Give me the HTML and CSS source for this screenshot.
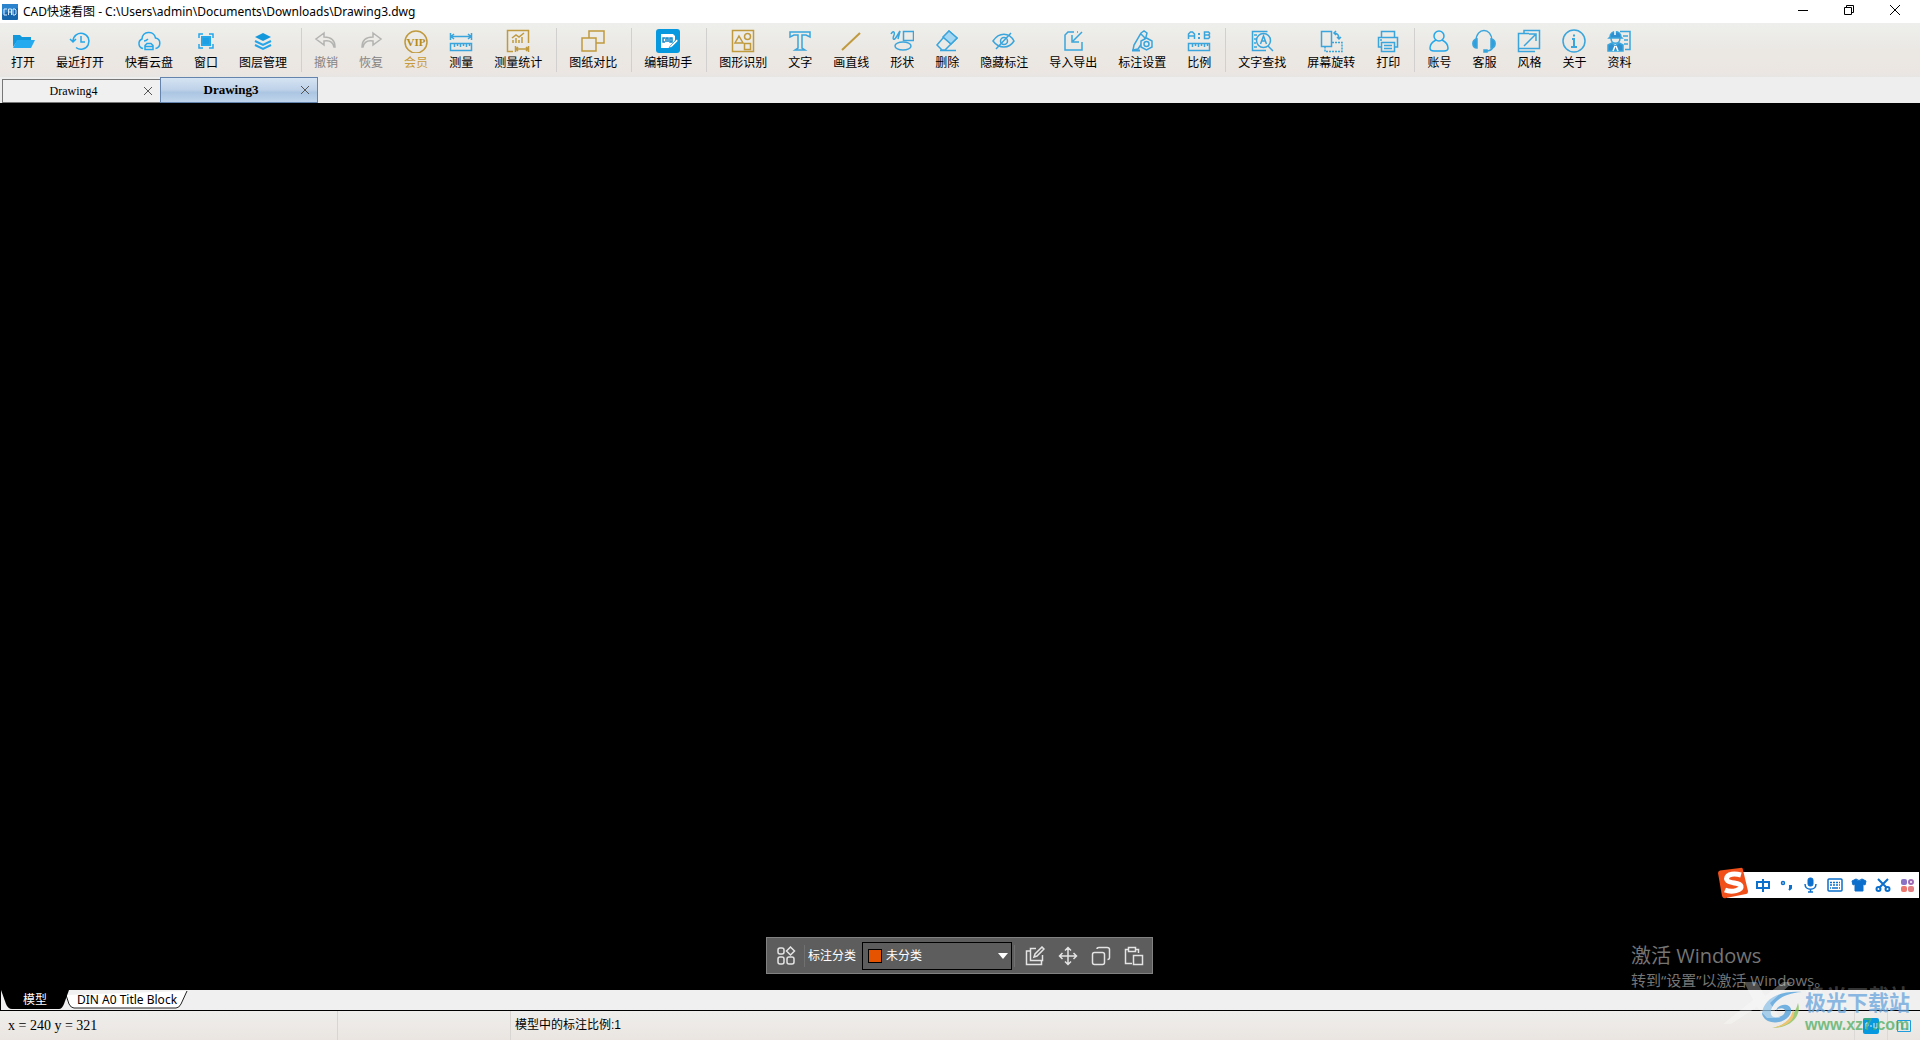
FILE: index.html
```html
<!DOCTYPE html>
<html lang="zh-CN">
<head>
<meta charset="utf-8">
<title>CAD快速看图</title>
<link rel="stylesheet" href="styles.css">
</head>
<body>
<div class="app">
  <header class="titlebar">
    <svg class="app-icon" viewBox="0 0 16 16"><rect width="16" height="16" rx="1" fill="#1565ad"/><path d="M0 0h16v4L0 10z" fill="#2a83cc"/><path d="M5 5H2v6h3M6.500 11V5h3v6M6.500 8h3M11 5h2l1 1v4l-1 1h-2z" fill="none" stroke="#d5eaff"/></svg>
    <h1 class="title">CAD快速看图 - C:\Users\admin\Documents\Downloads\Drawing3.dwg</h1>
    <div class="window-controls">
      <button class="win-btn" aria-label="最小化"><svg viewBox="0 0 12 12"><path d="M1 6.500h10"/></svg></button>
      <button class="win-btn" aria-label="还原"><svg viewBox="0 0 12 12"><path d="M1.500 3.500h7v7h-7zM3.500 3V1.500h7v7H9"/></svg></button>
      <button class="win-btn" aria-label="关闭"><svg viewBox="0 0 12 12"><path d="M1 1l10 10M11 1L1 11"/></svg></button>
    </div>
  </header>

  <nav class="toolbar" aria-label="工具栏">
    <button class="tool"><svg viewBox="0 0 24 24"><path d="M2 18V6h7l2 2h9v3H7z" fill="#1498dc"/><path d="M6 11h18l-4 8H2z" fill="#25a9ef"/></svg>打开</button>
    <button class="tool"><svg class="cyan" viewBox="0 0 24 24"><path d="M5 12a8 8 0 1 1 3 6.500M2 10l3 3 3-3M13 7v6h4"/></svg>最近打开</button>
    <button class="tool"><svg class="cyan" viewBox="0 0 24 24"><path d="M6 19.500a5 5 0 0 1-1-9.500C5 2 17 1 18.500 9c6 1 5.500 9.500 0 10.500M7 12c2 0 3-1 4-2M8 20.500v-4l2-2h4l2 2v4zM8 17.500h8"/></svg>快看云盘</button>
    <button class="tool"><svg class="cyan" viewBox="0 0 24 24"><rect x="8" y="8" width="8" height="8" fill="#1f9fe3" stroke-width="2"/><path d="M5 9V5h4M15 5h4v4M19 15v4h-4M9 19H5v-4"/></svg>窗口</button>
    <button class="tool"><svg viewBox="0 0 24 24"><path d="M12 4l8 4-8 4-8-4z" fill="#1498dc"/><path d="M4 12l8 4 8-4M4 16l8 4 8-4" fill="none" stroke="#25a5e9" stroke-width="2"/></svg>图层管理</button>
    <span class="sep"></span>
    <button class="tool muted" disabled><svg class="gray" viewBox="0 0 24 24"><path d="M10 4l-8 6 8 6v-4c6-1 9 1 10 6h1c0-7-4-10-11-10z"/></svg>撤销</button>
    <button class="tool muted" disabled><svg class="gray" viewBox="0 0 24 24"><path d="M14 4l8 6-8 6v-4c-6-1-9 1-10 6H3c0-7 4-10 11-10z"/></svg>恢复</button>
    <button class="tool vip"><svg class="gold" viewBox="0 0 24 24"><circle cx="12" cy="13" r="11"/><text x="12" y="17" class="vip-text">VIP</text></svg>会员</button>
    <button class="tool"><svg class="blue" viewBox="0 0 24 24"><path d="M1.500 4v7M22.500 4v7M2 7.500h20M5 5L2 7.500 5 10M19 5l3 2.500L19 10M1.500 14.500h21v7h-21zM5.500 15v3M8.500 15v2M11.500 15v3M14.500 15v2M17.500 15v3M20.500 15v2"/></svg>测量</button>
    <button class="tool"><svg class="gold" viewBox="0 0 24 24"><path d="M7 22.500H1.500v-21h21V14M6 9l4-3 3 2 5-4M7 14v-3M10 14V9M13 14v-3M16 14V8M9.500 17v6M22.500 17v6M10 20h12M12 18l-2 2 2 2M20 18l2 2-2 2"/></svg>测量统计</button>
    <span class="sep"></span>
    <button class="tool"><svg class="gold" viewBox="0 0 24 24"><path d="M8 9V2h15v12h-8M1 9h14v13H1z"/></svg>图纸对比</button>
    <span class="sep"></span>
    <button class="tool"><svg viewBox="0 0 24 24"><rect width="24" height="24" rx="3" fill="#0799df"/><path d="M5 5h12l2 2v4l-6 8H5z" fill="#fff"/><path d="M9 9H7v4h2M10 13V9h2v4M14 9h2v4h-2z" fill="none" stroke="#1689c8"/><path d="M21 10l-7 7-1 2 3-1 6-6z" fill="#fff" stroke="#0784c8" stroke-width=".5"/></svg>编辑助手</button>
    <span class="sep"></span>
    <button class="tool"><svg class="gold" viewBox="0 0 24 24"><path d="M1.500 1.500h21v21h-21zM8 7l4 7H4zM13.500 14.500h6v6h-6z"/><circle cx="16.500" cy="7.500" r="3"/></svg>图形识别</button>
    <button class="tool"><svg class="blue" viewBox="0 0 24 24"><path d="M2 3h20v5l-4-2h-4v13l3 2H7l3-2V6H6L2 8z"/></svg>文字</button>
    <button class="tool"><svg class="gold" viewBox="0 0 24 24"><path d="M3 21L21 4" stroke-width="2"/></svg>画直线</button>
    <button class="tool"><svg class="blue" viewBox="0 0 24 24"><path d="M13.500 2.500h10v9h-10zM1 5c2-4 4-2 3 1-2 5 0 6 3 1l3-5-2 8"/><ellipse cx="13" cy="17" rx="8" ry="4"/></svg>形状</button>
    <button class="tool"><svg class="blue" viewBox="0 0 24 24"><path d="M14 2l8 7-12 12H7l-5-5zM8 8l8 7M5 21.500h16"/><path d="M14 2l8 7-6 6-8-7z" fill="#a6d7f2"/></svg>删除</button>
    <button class="tool"><svg class="blue" viewBox="0 0 24 24"><path d="M1 12c6-9 16-9 21 0-5 8-15 8-21 0zM19 4L4 20"/><circle cx="12" cy="12" r="3.500"/></svg>隐藏标注</button>
    <button class="tool"><svg class="blue" viewBox="0 0 24 24"><path d="M13 3H7L4 6v15h17v-8M21 3l-9 9M11 6v7h7M16 3h1"/></svg>导入导出</button>
    <button class="tool"><svg class="blue" viewBox="0 0 24 24"><path d="M11 4l3-2 3 2-1 4-8 12-5 1 1-5zM11 5l4 4"/><path d="M2 21.500h8" stroke-width="2"/><path d="M16.500 9l5.500 3v6l-5.500 3-5.500-3v-6z" fill="#eeecea"/><circle cx="16.500" cy="15" r="2.500"/></svg>标注设置</button>
    <button class="tool"><svg class="blue" viewBox="0 0 24 24"><path d="M1.500 10V5l2-2h2l2 2v5M2 7h5M17.500 3v6.500h4l1-1V7l-1-1h-4 4l1-1V4l-1-1zM1.500 14.500h21v7h-21zM5.500 15v3M8.500 15v2M11.500 15v3M14.500 15v2M17.500 15v3M20.500 15v2"/><path d="M12 4v2M12 8v2" stroke-width="2"/></svg>比例</button>
    <span class="sep"></span>
    <button class="tool"><svg class="blue" viewBox="0 0 24 24"><path d="M16 21.500H2.500v-19h15M4 6h3M4 10h2M4 14h2M4 18h3M18 17l5 5"/><circle cx="13.500" cy="11.500" r="7"/><path d="M10.500 15l3-8 3 8M11.500 12h4"/></svg>文字查找</button>
    <button class="tool"><svg class="blue" viewBox="0 0 24 24"><path d="M2.500 2.500h10v15h-10zM15 4c4 0 5 2 5 6M17 2l-2 2 2 2M18 8l2 2 2-2"/><path d="M13 13.500h10v9h-17V18" stroke-dasharray="2 1"/></svg>屏幕旋转</button>
    <button class="tool"><svg class="blue" viewBox="0 0 24 24"><path d="M5.500 8V2.500h13V8M5 18H2.500V8.500h19V18H19M5.500 13.500h13v9h-13zM8 16.500h8M8 19.500h8M4 11h2"/></svg>打印</button>
    <span class="sep"></span>
    <button class="tool"><svg class="cyan" viewBox="0 0 24 24"><circle cx="12" cy="7" r="5"/><path d="M9 11c-4 2-6 5-6 8q0 3 4 3h10q4 0 4-3c0-3-2-6-6-8"/></svg>账号</button>
    <button class="tool"><svg class="blue" viewBox="0 0 24 24"><path d="M4 12c0-14 16-14 16 0M21 18c-1 3-3 4-7 4"/><path d="M5 10v9c-5 0-6-8 0-9zM19 10v9c5 0 6-8 0-9zM12 21h3v2h-3z" fill="#2f9fdd"/></svg>客服</button>
    <button class="tool"><svg class="blue" viewBox="0 0 24 24"><path d="M7 4.500v-3h15.500v18H19M18 22.500H1.500v-18H12M1.500 19.500h21M7 17L18 6M12 5h7v7"/></svg>风格</button>
    <button class="tool"><svg class="blue" viewBox="0 0 24 24"><circle cx="12" cy="12" r="11"/><path d="M10 10h2v8M9 18h6M12 5.500v2" stroke-width="2"/></svg>关于</button>
    <button class="tool"><svg class="blue" viewBox="0 0 24 24"><path d="M13 2.500h10v18h-5M16 7h5M17 11h4M17 15h4"/><path d="M3 8c0-7 11-7 11 0l1 1H2z" fill="#2f8fcf"/><path d="M4 9c0 7 9 7 9 0"/><path d="M5 14l3 3 4-3 4 2v6H1v-6z" fill="#2f8fcf"/><path d="M8 17l-2 5M9 17l2 5M8 2v4" stroke="#fff"/></svg>资料</button>
  </nav>

  <div class="doc-tabs" role="tablist">
    <div class="doc-tab"><button class="doc-name" role="tab">Drawing4</button><button class="doc-close" aria-label="关闭 Drawing4"><svg viewBox="0 0 8 8"><path d="M0 0l8 8M8 0L0 8"/></svg></button></div>
    <div class="doc-tab active"><button class="doc-name" role="tab" aria-selected="true">Drawing3</button><button class="doc-close" aria-label="关闭 Drawing3"><svg viewBox="0 0 8 8"><path d="M0 0l8 8M8 0L0 8"/></svg></button></div>
  </div>

  <main class="canvas">
    <div class="activation">
      <p class="activation-title">激活 Windows</p>
      <p class="activation-sub">转到“设置”以激活 Windows。</p>
    </div>

    <div class="ime">
      <svg class="ime-logo" viewBox="0 0 32 32"><path d="M1 6q0-2 2-2.500L23 1q3-1 3 2l5 21q0 3-2 3L9 31q-3 1-4-2z" fill="#f1501b"/><path d="M24 8C14 5 8 9 10 13s13 2 14 6-9 7-16 4" fill="none" stroke="#fff" stroke-width="5"/></svg>
      <button class="ime-btn" aria-label="中文"><svg viewBox="0 0 16 16"><path d="M2 5h12v6H2zM8 2v13" fill="none" stroke-width="2"/></svg></button>
      <button class="ime-btn" aria-label="标点"><svg viewBox="0 0 16 16"><circle cx="4" cy="6" r="1.500" fill="none" stroke-width="1.500"/><path d="M10 9h2v2l-2 2" stroke-width="2"/></svg></button>
      <button class="ime-btn" aria-label="语音"><svg viewBox="0 0 16 16"><rect x="5" y="1" width="5" height="8" rx="2"/><path d="M2 7c0 7 11 7 11 0M7.500 12v3M5 15h5" fill="none" stroke-width="1.500"/></svg></button>
      <button class="ime-btn" aria-label="键盘"><svg viewBox="0 0 16 16"><rect x="1" y="2" width="14" height="12" rx="1" fill="none" stroke-width="1.500"/><path d="M3 5.500h2M6 5.500h2M9 5.500h2M12 5.500h1M3 8h2M6 8h2M9 8h2M12 8h1M3 11h1M5 11h6M12 11h1" fill="none" stroke-width="1.500"/></svg></button>
      <button class="ime-btn" aria-label="皮肤"><svg viewBox="0 0 16 16"><path d="M5 2q3 3 6 0l4 2-1 4-2-1v7H4V7L2 8 1 4z"/></svg></button>
      <button class="ime-btn" aria-label="截图"><svg viewBox="0 0 16 16"><path d="M3 2l9 9M13 2l-9 9" fill="none" stroke-width="2"/><circle cx="3.500" cy="12" r="2" fill="none" stroke-width="2"/><circle cx="12.500" cy="12" r="2" fill="none" stroke-width="2"/></svg></button>
      <button class="ime-btn" aria-label="工具箱"><svg viewBox="0 0 16 16"><g stroke="none"><rect x="2" y="2" width="6" height="6" rx="2" fill="#8a72c4"/><rect x="2" y="9" width="6" height="6" rx="2" fill="#ed796e"/><rect x="9" y="9" width="6" height="6" rx="2" fill="#e37f83"/></g><circle cx="12" cy="5" r="2" fill="none" stroke="#a06bb4" stroke-width="2"/></svg></button>
    </div>

    <div class="float-bar">
      <button class="float-btn" aria-label="分类面板"><svg viewBox="0 0 20 20"><rect x="2" y="2" width="6" height="6" rx="2"/><path d="M14.500 1l4 4-4 4-4-4z"/><rect x="2" y="11" width="6" height="7" rx="2"/><rect x="11" y="11" width="7" height="7" rx="2"/></svg></button>
      <span class="float-sep"></span>
      <label class="float-label" for="category">标注分类</label>
      <div class="combo">
        <span class="swatch"></span>
        <select class="combo-select" id="category"><option>未分类</option></select>
        <svg class="combo-arrow" viewBox="0 0 10 6"><path d="M0 0h10L5 6z"/></svg>
      </div>
      <span class="float-sep"></span>
      <button class="float-btn" aria-label="编辑"><svg viewBox="0 0 20 20"><path d="M11 2.500H5.500v12h12V9M5 5H1.500v13.500h15V15M9 11l1-3 7-7 2 2-7 7z"/></svg></button>
      <button class="float-btn" aria-label="移动"><svg viewBox="0 0 20 20"><path d="M10 2v16M2 10h16M7 4.500l3-3 3 3M7 15.500l3 3 3-3M4.500 7l-3 3 3 3M15.500 7l3 3-3 3"/></svg></button>
      <button class="float-btn" aria-label="复制"><svg viewBox="0 0 20 20"><rect x="1.500" y="6.500" width="12" height="12" rx="2"/><path d="M6 3q0-1.500 2-1.500h8q2.500 0 2.500 2v8q0 2-2 2"/></svg></button>
      <button class="float-btn" aria-label="粘贴"><svg viewBox="0 0 20 20"><path d="M8 17.500H1.500v-14H4M12 3.500h2.500V7M4.500 1.500h7v4h-7zM9.500 9.500h9v9h-9z"/></svg></button>
    </div>
  </main>

  <div class="layout-tabs" role="tablist">
    <button class="layout-tab model" role="tab" aria-selected="true"><svg class="tab-shape" viewBox="0 0 68 19" preserveAspectRatio="none"><path d="M0 0h68l-5 14q-2 5-5 5H11q-4 0-6-5z" fill="#000"/></svg><span>模型</span></button>
    <button class="layout-tab sheet" role="tab"><svg class="tab-shape" viewBox="0 0 122 19" preserveAspectRatio="none"><path d="M0 5l3 9q2 4 5 4h102q3 0 5-4l6-13" fill="#fff" stroke="#222"/></svg><span>DIN A0 Title Block</span></button>
  </div>

  <footer class="statusbar">
    <span class="coords">x = 240 y = 321</span>
    <span class="cell-empty"></span>
    <span class="scale">模型中的标注比例:1</span>
    <button class="status-btn" aria-label="编辑助手"><svg viewBox="0 0 16 16"><rect width="16" height="16" rx="2" fill="#0799df"/><path d="M3 11V5h2v3H3M7 8h2M11 5v5h3V5" fill="none" stroke="#d8f1ff"/></svg></button>
    <button class="status-btn" aria-label="布局"><svg viewBox="0 0 16 16"><path d="M1.500 2.500h13v11h-13zM6 5v6h6" fill="none" stroke="#1f9cdc"/></svg></button>
  </footer>

  <div class="watermark">
    <svg class="wm-ghost" viewBox="0 0 70 44"><path d="M21 1h13l8 14L60 1h10L47 22l10 15H44L34 26 8 43H0l30-24z" fill="#fff"/></svg>
    <svg class="wm-logo" viewBox="0 0 42 40"><path d="M1 24C2 9 19 0 41 2 23 3 13 11 10 20c-2 9 8 9 13 4 4-6-4-8-8-3 2-9 17-8 15 1C27 34 5 37 1 24z" fill="#4a9ddc"/><path d="M37 13c4 13-7 25-26 25 12-2 22-10 26-25z" fill="#80c257"/><path d="M12 38c12-3 19-10 20-19 4 10-6 18-20 19z" fill="#f2b64b"/></svg>
    <div class="wm-text">
      <span class="wm-name">极光下载站</span>
      <span class="wm-url">www.xz7.com</span>
    </div>
  </div>
</div>
</body>
</html>
```
FILE: styles.css
```css
* {
  box-sizing: border-box;
}

body {
  margin: 0;
  font: 12px/16px "Liberation Sans", "Noto Sans CJK SC", sans-serif;
  color: #000;
}

button {
  margin: 0;
  padding: 0;
  border: 0;
  background: none;
  font: inherit;
  color: inherit;
}

svg {
  display: block;
  flex: none;
}

.app {
  position: relative;
  display: flex;
  flex-direction: column;
  height: 100vh;
  overflow: hidden;
}

/* Title bar */
.titlebar {
  display: flex;
  align-items: center;
  height: 23px;
  padding-left: 2px;
  background: #fff;
}

.app-icon {
  width: 16px;
  height: 16px;
}

.title {
  flex: 1;
  margin: 0 0 0 5px;
  font: 12px/16px "Noto Sans", "Noto Sans CJK SC", sans-serif;
  white-space: nowrap;
}

.window-controls {
  display: flex;
  padding: 0 2px 3px 0;
}

.win-btn {
  display: flex;
  align-items: center;
  justify-content: center;
  width: 46px;
  height: 20px;
}

.win-btn svg {
  width: 12px;
  height: 12px;
  fill: none;
  stroke: #000;
}

/* Toolbar */
.toolbar {
  display: flex;
  flex: none;
  height: 54px;
  padding-left: 1px;
  background: linear-gradient(#eeefec, #ebe8e4 50%, #ebe6e2 90%, #e7e5e3);
}

.tool {
  display: flex;
  flex-direction: column;
  align-items: center;
  gap: 2px;
  padding: 6px 11px 0 10px;
  white-space: nowrap;
}

.tool svg {
  width: 24px;
  height: 24px;
  fill: none;
  stroke-width: 1.5;
}

.tool .cyan {
  stroke: #25a7ea;
}

.tool .blue {
  stroke: #3aa5dc;
}

.tool .gold {
  stroke: #c09a3e;
}

.tool .gray {
  stroke: #b3b3b1;
}

.muted {
  color: #858381;
}

.vip {
  color: #c79a3c;
}

.vip-text {
  font: bold 11px "Liberation Serif", serif;
  text-anchor: middle;
  fill: #b48a1c;
  stroke: none;
}

.sep {
  width: 1px;
  height: 44px;
  margin: 5px 2px 0 3px;
  background: #d2d0ce;
}

/* Document tabs */
.doc-tabs {
  display: flex;
  flex: none;
  align-items: flex-end;
  height: 26px;
  padding-left: 2px;
  background: #eee;
}

.doc-tab {
  display: flex;
  align-items: center;
  width: 158px;
  height: 24px;
  padding-right: 8px;
  border: 1px solid #777;
  border-right: 0;
  background: #f0f0f0;
  font: 12px/16px "Liberation Serif", serif;
}

.doc-tab.active {
  height: 26px;
  border: 1px solid #6484ad;
  background: linear-gradient(#d6e4f3, #bdd1e8 50%, #abc5e2 60%, #c0d5ec);
  font-size: 13px;
  font-weight: bold;
}

.doc-name {
  flex: 1;
}

.doc-close svg {
  width: 8px;
  height: 8px;
  stroke: #555;
}

/* Drawing area */
.canvas {
  position: relative;
  flex: 1;
  background: #000;
}

.activation {
  position: absolute;
  right: 94px;
  bottom: 0;
  width: 195px;
  color: #757575;
  font-family: "Open Sans", "Noto Sans CJK SC", sans-serif;
  white-space: nowrap;
}

.activation p {
  margin: 0;
}

.activation-title {
  font-size: 20px;
  line-height: 28px;
}

.activation-sub {
  font-size: 15px;
  line-height: 20px;
}

.ime {
  position: absolute;
  right: 1px;
  bottom: 92px;
  display: flex;
  align-items: center;
  height: 26px;
  background: #fff;
}

.ime-logo {
  width: 32px;
  height: 32px;
  margin: 0 2px 4px -10px;
}

.ime-btn {
  display: flex;
  justify-content: center;
  width: 24px;
}

.ime-btn svg {
  width: 16px;
  height: 16px;
  fill: #0d6fcc;
  stroke: #0d6fcc;
}

.float-bar {
  position: absolute;
  bottom: 16px;
  left: 50%;
  display: flex;
  align-items: center;
  width: 387px;
  height: 37px;
  margin-left: -194px;
  padding: 0 2px;
  border: 1px solid #828282;
  background: #5d5d5d;
  color: #fff;
}

.float-btn {
  display: flex;
  justify-content: center;
  width: 33px;
}

.float-btn svg {
  width: 20px;
  height: 20px;
  fill: none;
  stroke: #e4e4e4;
  stroke-width: 1.5;
}

.float-sep {
  width: 1px;
  height: 22px;
  margin: 0 3px 0 2px;
  background: #707070;
}

.float-label {
  margin-right: 6px;
}

.combo {
  position: relative;
  width: 150px;
  height: 28px;
}

.combo-select {
  width: 100%;
  height: 100%;
  padding: 0 20px 0 23px;
  border: 1px solid #000;
  border-radius: 0;
  appearance: none;
  background: #5d5d5d;
  color: #fff;
  font: inherit;
}

.swatch {
  position: absolute;
  top: 7px;
  left: 6px;
  width: 14px;
  height: 14px;
  border: 1px solid #000;
  background: #e65300;
}

.combo-arrow {
  position: absolute;
  top: 11px;
  right: 4px;
  width: 10px;
  height: 6px;
  fill: #fff;
}

/* Model and layout tabs */
.layout-tabs {
  display: flex;
  flex: none;
  height: 21px;
  border-bottom: 1px solid #000;
  border-left: 1px solid #000;
  background: #f0f0f0;
  font-family: "Noto Sans", "Noto Sans CJK SC", sans-serif;
}

.layout-tab {
  position: relative;
  height: 19px;
}

.layout-tab span {
  position: relative;
}

.tab-shape {
  position: absolute;
  inset: 0;
  width: 100%;
  height: 100%;
}

.model {
  z-index: 1;
  width: 68px;
  color: #fff;
}

.sheet {
  width: 122px;
  margin-left: -3px;
}

/* Status bar */
.statusbar {
  display: flex;
  flex: none;
  align-items: stretch;
  height: 29px;
  background: linear-gradient(#efeeec, #eae5e1);
  line-height: 29px;
}

.coords {
  width: 338px;
  padding-left: 8px;
  border-right: 1px solid #d8d5d2;
  font: 14px/29px "Liberation Serif", serif;
}

.cell-empty {
  width: 173px;
  border-right: 1px solid #d8d5d2;
}

.scale {
  flex: 1;
  padding-left: 4px;
}

.status-btn {
  display: flex;
  align-items: center;
  justify-content: center;
  width: 33px;
  border-left: 1px solid #dcd9d6;
}

.status-btn svg {
  width: 16px;
  height: 16px;
}

/* Site mark over the lower right corner */
.watermark {
  position: absolute;
  right: 10px;
  bottom: 5px;
  display: flex;
  align-items: flex-end;
  gap: 2px;
  opacity: 0.75;
  pointer-events: none;
}

.wm-ghost {
  width: 70px;
  height: 44px;
  margin: 0 -34px 10px 0;
  opacity: 0.4;
}

.wm-logo {
  width: 42px;
  height: 40px;
  margin-bottom: 5px;
}

.wm-text {
  display: flex;
  flex-direction: column;
}

.wm-name {
  color: #67a5dc;
  font: bold 21px/28px "Noto Sans CJK SC", sans-serif;
  text-shadow: 0 -6px 0 rgba(255, 255, 255, 0.3);
}

.wm-url {
  color: #4fae62;
  font: bold 16px/20px "Liberation Sans", sans-serif;
}
```
